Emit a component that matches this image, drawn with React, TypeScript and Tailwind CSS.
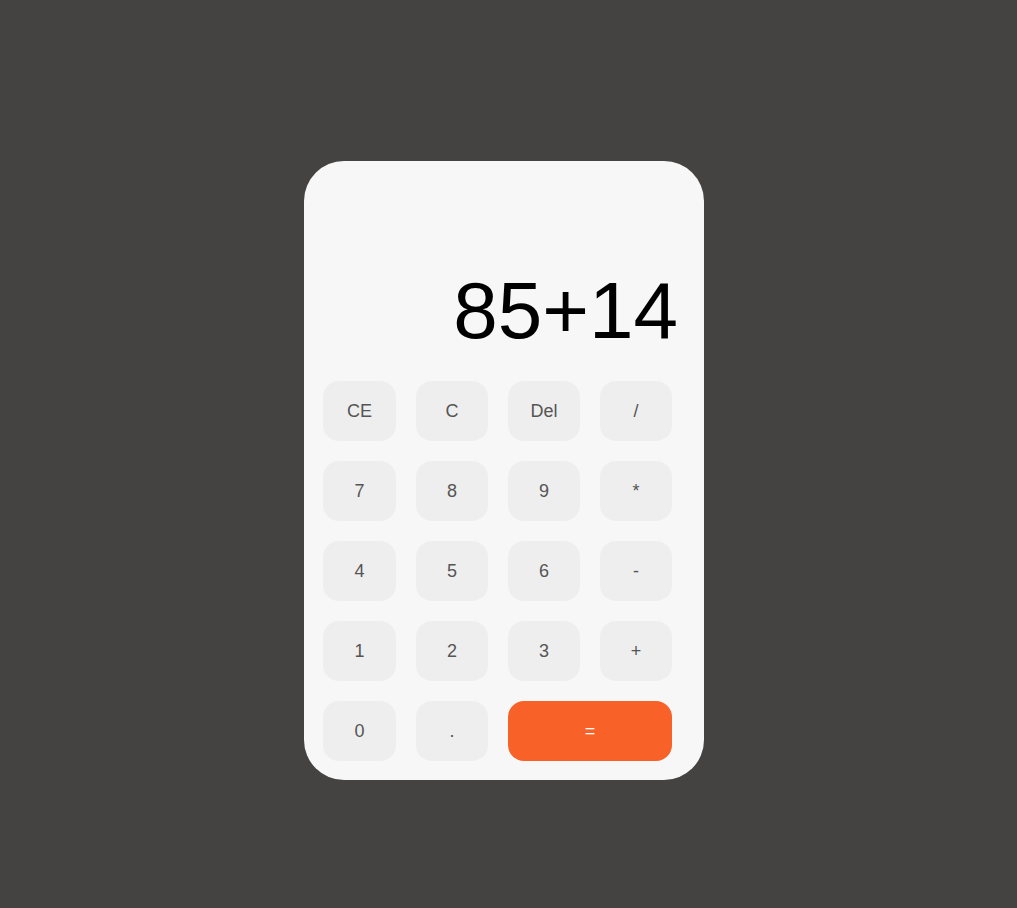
const KEYS: { label: string; accent?: boolean }[] = [
  { label: "CE" },
  { label: "C" },
  { label: "Del" },
  { label: "/" },
  { label: "7" },
  { label: "8" },
  { label: "9" },
  { label: "*" },
  { label: "4" },
  { label: "5" },
  { label: "6" },
  { label: "-" },
  { label: "1" },
  { label: "2" },
  { label: "3" },
  { label: "+" },
  { label: "0" },
  { label: "." },
  { label: "=", accent: true },
];

export default function App() {
  return (
    <div
      className="flex min-h-[908px] w-full items-start justify-center bg-[#454341] pt-[161px] pr-[9px]"
      style={{ fontFamily: '"Liberation Sans", Arial, sans-serif' }}
    >
      <div className="flex w-[400px] flex-col rounded-[40px] bg-[#f7f7f7] pt-[20px] pb-[19px] pl-[19px]">
        <div className="flex h-[200px] items-end justify-end pr-[26px] pb-[10px]">
          <span className="text-[80px] leading-normal text-black">85+14</span>
        </div>
        <div className="grid grid-cols-[73px_72px_72px_72px] gap-[20px]">
          {KEYS.map((k) => (
            <button
              key={k.label}
              className={`flex h-[60px] items-center justify-center rounded-[16px] text-[18px] ${
                k.accent
                  ? "col-span-2 bg-[#f86128] text-white"
                  : "bg-[#eeeeee] text-[#555555]"
              }`}
            >
              {k.label}
            </button>
          ))}
        </div>
      </div>
    </div>
  );
}
